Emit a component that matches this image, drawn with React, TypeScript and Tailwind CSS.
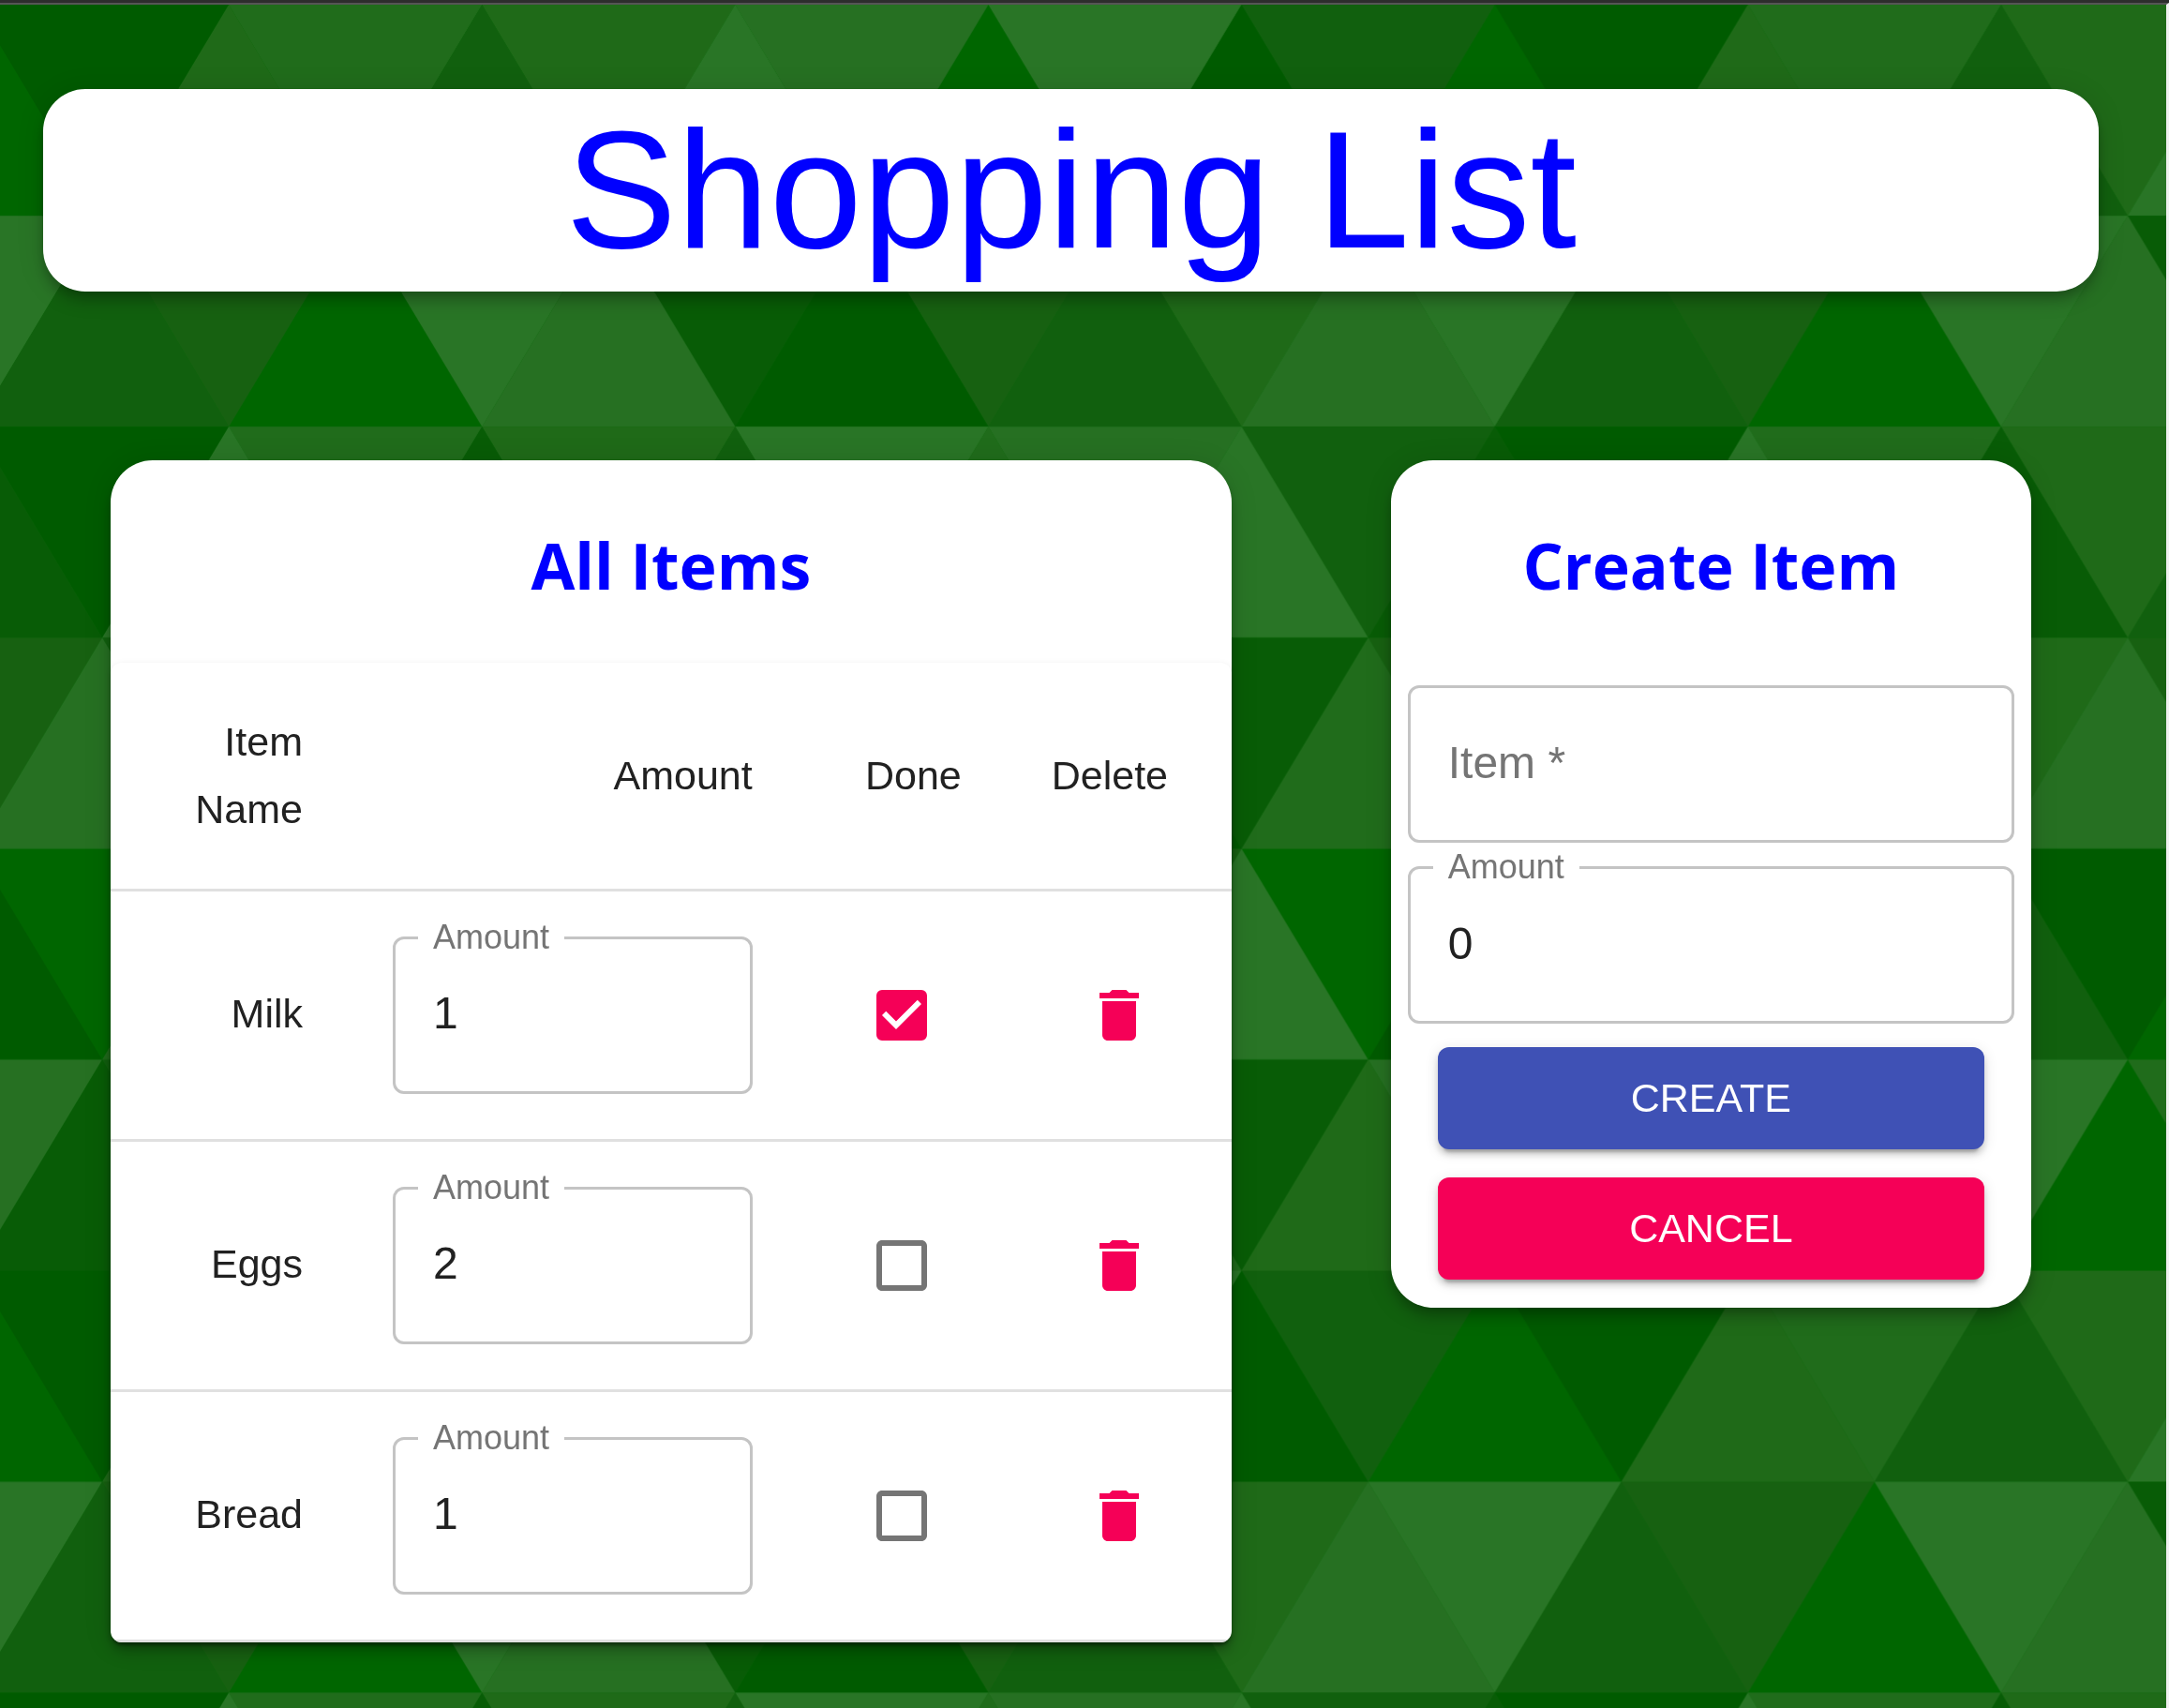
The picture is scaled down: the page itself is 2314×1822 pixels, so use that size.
import React, { useState } from "react";
import { MdCheckBox, MdCheckBoxOutlineBlank, MdDelete } from "react-icons/md";

interface IItem {
  id: number;
  name: string;
  amount: number;
  done: boolean;
}

interface IAmountFieldProps {
  id: string;
  value: number;
  onChange: (value: number) => void;
}

const initialItems: IItem[] = [
  { id: 1, name: "Milk", amount: 1, done: true },
  { id: 2, name: "Eggs", amount: 2, done: false },
  { id: 3, name: "Bread", amount: 1, done: false },
];

// shades of green, dark to light
const shades = [
  "#005b00",
  "#085c06",
  "#11600e",
  "#176111",
  "#1f6a18",
  "#206c1b",
  "#267022",
  "#297526",
];

// one entry per triangle row, -1 leaves the base color
const triangleRows: { down: number[]; up: number[] }[] = [
  { down: [0, 5, 4, 6, 7, 2], up: [-1, 4, 2, 7, -1, 0] },
  { down: [7, 3, 7, 1, 3, 4], up: [2, -1, 6, 0, 2, 6] },
  { down: [0, 5, 4, 7, 6, 2], up: [1, 7, 1, 2, 5, 7] },
  { down: [3, 2, 4, 3, -1, 1], up: [6, 3, 6, 4, 0, 5] },
  { down: [-1, 6, 0, 2, 3, -1], up: [0, 5, 2, -1, 1, 7] },
  { down: [6, 2, 7, 5, 7, 1], up: [1, 0, -1, 0, 5, 4] },
];

const trianglePoints = (center: number, y: number, up: boolean) =>
  up
    ? `${center},${y} ${center - 90},${y + 150} ${center + 90},${y + 150}`
    : `${center},${y + 150} ${center - 90},${y} ${center + 90},${y}`;

const Triangles = () => (
  <svg className="fixed inset-0 -z-10 h-full w-full" aria-hidden="true">
    <defs>
      <pattern
        id="triangles"
        width="1080"
        height="900"
        patternUnits="userSpaceOnUse"
        patternTransform="translate(-26 5) scale(1.5006)"
      >
        <rect width="1080" height="900" fill="#006600" />
        {triangleRows.map((row, r) =>
          [false, true].map((up) => {
            const fills = up ? row.up : row.down;
            // triangles centered on the tile edge are drawn on both sides
            const onEdge = (r % 2 === 0) === up;
            const cells = onEdge ? [...fills, fills[0]] : fills;
            return cells.map((shade, i) =>
              shade >= 0 ? (
                <polygon
                  key={`${r}-${up}-${i}`}
                  fill={shades[shade]}
                  points={trianglePoints(
                    i * 180 + (onEdge ? 0 : 90),
                    r * 150,
                    up
                  )}
                />
              ) : null
            );
          })
        )}
      </pattern>
    </defs>
    <rect width="100%" height="100%" fill="url(#triangles)" />
  </svg>
);

const AmountField = (props: IAmountFieldProps) => (
  <div className="relative rounded-xl border-3 border-[#c4c4c4]">
    <label
      htmlFor={props.id}
      className="absolute -top-5 left-6 bg-white px-4 text-4xl/9 text-[#757575]"
    >
      Amount
    </label>
    <input
      id={props.id}
      type="text"
      inputMode="numeric"
      value={props.value}
      onChange={(e) => props.onChange(Number(e.target.value))}
      className="h-[162px] w-full px-10 pb-1 text-5xl text-[#212121] outline-none"
    />
  </div>
);

const ItemTable = () => {
  const [items, setItems] = useState<IItem[]>(initialItems);

  const update = (id: number, change: Partial<IItem>) =>
    setItems(items.map((i) => (i.id === id ? { ...i, ...change } : i)));

  return (
    <section className="rounded-t-[45px] rounded-b-xl bg-white shadow-[0_6px_12px_-3px_rgba(0,0,0,0.2),0_12px_15px_rgba(0,0,0,0.14),0_3px_30px_rgba(0,0,0,0.12)]">
      <h2 className="pt-16 pb-14 text-center font-['Open_Sans',sans-serif] text-[68px]/24 font-bold text-[#0000ff]">
        All Items
      </h2>
      <div className="overflow-hidden rounded-xl shadow-[0_6px_3px_-3px_rgba(0,0,0,0.2),0_3px_3px_rgba(0,0,0,0.14),0_3px_9px_rgba(0,0,0,0.12)]">
        <table className="w-full table-fixed text-[43px]/18 text-[#212121]">
          <colgroup>
            <col className="w-[253px]" />
            <col />
            <col className="w-[223px]" />
            <col className="w-60" />
          </colgroup>
          <thead>
            <tr className="h-[242px] border-b-3 border-[#e0e0e0]">
              <th className="pr-12 pl-20 text-right font-normal">Item Name</th>
              <th className="px-12 text-right font-normal">Amount</th>
              <th className="px-12 text-right font-normal">Done</th>
              <th className="pl-12 text-left font-normal">Delete</th>
            </tr>
          </thead>
          <tbody>
            {items.map((item) => (
              <tr key={item.id} className="border-b-3 border-[#e0e0e0]">
                <td className="pr-12 pb-1 text-right">{item.name}</td>
                <td className="px-12 py-12">
                  <AmountField
                    id={`amount-${item.id}`}
                    value={item.amount}
                    onChange={(amount) => update(item.id, { amount })}
                  />
                </td>
                <td>
                  <label className="flex cursor-pointer justify-center">
                    <input
                      type="checkbox"
                      className="sr-only"
                      aria-label={`${item.name} done`}
                      checked={item.done}
                      onChange={() => update(item.id, { done: !item.done })}
                    />
                    {item.done ? (
                      <MdCheckBox size={72} className="text-[#f50057]" />
                    ) : (
                      <MdCheckBoxOutlineBlank
                        size={72}
                        className="text-[#757575]"
                      />
                    )}
                  </label>
                </td>
                <td>
                  <button
                    type="button"
                    aria-label={`Delete ${item.name}`}
                    className="mx-auto block cursor-pointer text-[#f50057]"
                    onClick={() =>
                      setItems(items.filter((i) => i.id !== item.id))
                    }
                  >
                    <MdDelete size={72} />
                  </button>
                </td>
              </tr>
            ))}
          </tbody>
        </table>
      </div>
    </section>
  );
};

const CreateItem = () => {
  const [name, setName] = useState("");
  const [amount, setAmount] = useState(0);

  const reset = () => {
    setName("");
    setAmount(0);
  };

  return (
    <form
      className="rounded-[45px] bg-white px-[18px] pb-[30px] shadow-[0_6px_12px_-3px_rgba(0,0,0,0.2),0_12px_15px_rgba(0,0,0,0.14),0_3px_30px_rgba(0,0,0,0.12)]"
      onSubmit={(e) => {
        e.preventDefault();
        reset();
      }}
    >
      <h2 className="pt-16 pb-14 text-center font-['Open_Sans',sans-serif] text-[68px]/24 font-bold text-[#0000ff]">
        Create Item
      </h2>
      <div className="flex flex-col gap-[25px] pt-6">
        <div className="rounded-xl border-3 border-[#c4c4c4]">
          <input
            type="text"
            aria-label="Item"
            placeholder="Item *"
            required
            value={name}
            onChange={(e) => setName(e.target.value)}
            className="h-[162px] w-full px-10 pb-1 text-5xl text-[#212121] outline-none placeholder:text-[#757575]"
          />
        </div>
        <AmountField id="new-amount" value={amount} onChange={setAmount} />
        <div className="flex flex-col gap-[30px] px-8">
          <button
            type="submit"
            className="h-[109px] cursor-pointer rounded-xl bg-[#3f51b5] text-[43px] text-white uppercase shadow-[0_9px_3px_-6px_rgba(0,0,0,0.2),0_6px_6px_rgba(0,0,0,0.14),0_3px_15px_rgba(0,0,0,0.12)]"
          >
            Create
          </button>
          <button
            type="button"
            onClick={reset}
            className="h-[109px] cursor-pointer rounded-xl bg-[#f50057] text-[43px] text-white uppercase shadow-[0_9px_3px_-6px_rgba(0,0,0,0.2),0_6px_6px_rgba(0,0,0,0.14),0_3px_15px_rgba(0,0,0,0.12)]"
          >
            Cancel
          </button>
        </div>
      </div>
    </form>
  );
};

export default function App() {
  return (
    <div className="border-t-3 border-[#2d2d2d] font-['Liberation_Sans',Arial,sans-serif]">
      <Triangles />
      <div className="min-h-screen border-t-2 border-r-3 border-t-[#555555] border-r-[#f1f1f1] pt-[90px] pr-[72px] pb-[70px] pl-[46px]">
        <h1 className="rounded-[45px] bg-white text-center text-[178px]/[216px] text-[#0000ff] shadow-[0_6px_12px_-3px_rgba(0,0,0,0.2),0_12px_15px_rgba(0,0,0,0.14),0_3px_30px_rgba(0,0,0,0.12)]">
          Shopping List
        </h1>
        <main className="grid grid-cols-[7fr_4fr] items-start gap-[170px] px-18 pt-45">
          <ItemTable />
          <CreateItem />
        </main>
      </div>
    </div>
  );
}
